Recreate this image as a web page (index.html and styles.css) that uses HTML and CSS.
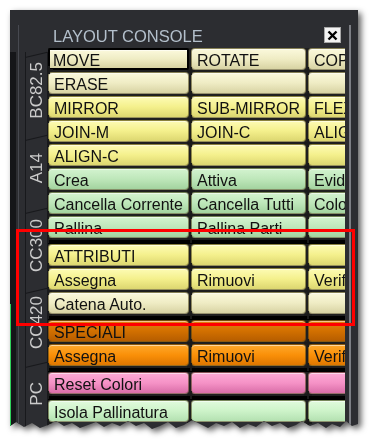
FILE: index.html
```html
<!DOCTYPE html>
<html lang="it">
<head>
  <meta charset="UTF-8" />
  <title>Layout Console</title>
  <link rel="stylesheet" href="styles.css">
</head>
<body>

  <div class="frame">
    <div class="window">

      <!-- colonna sinistra con le linguette -->
      <div class="side">
        <div class="edge"></div>
        <div class="vline"></div>
        <div class="tabs">
          <div class="tab t1"><span>BC82.5</span></div>
          <div class="tab t2"><span>A14</span></div>
          <div class="tab t3"><span>CC300</span></div>
          <div class="tab t4"><span>CC420</span></div>
          <div class="tab t5"><span>PC</span></div>
        </div>
      </div>

      <!-- pannello comandi -->
      <div class="main">
        <div class="head">
          <span class="title">LAYOUT CONSOLE</span>
          <span class="close">
            <svg width="11" height="11" viewBox="0 0 11 11">
              <path d="M1.5 1.5 L9.5 9.5 M9.5 1.5 L1.5 9.5" stroke="#000" stroke-width="2.4" fill="none"/>
            </svg>
          </span>
        </div>

        <div class="grp">
          <div class="cell pale sel">MOVE</div><div class="cell pale">ROTATE</div><div class="cell pale">COPY</div>
          <div class="cell pale">ERASE</div><div class="cell pale"></div><div class="cell pale"></div>
          <div class="cell yellow">MIRROR</div><div class="cell yellow">SUB-MIRROR</div><div class="cell yellow">FLEX</div>
          <div class="cell yellow">JOIN-M</div><div class="cell yellow">JOIN-C</div><div class="cell yellow">ALIGN</div>
          <div class="cell yellow">ALIGN-C</div><div class="cell yellow"></div><div class="cell yellow"></div>
          <div class="cell green">Crea</div><div class="cell green">Attiva</div><div class="cell green">Evidenzia</div>
          <div class="cell green">Cancella Corrente</div><div class="cell green">Cancella Tutti</div><div class="cell green">Colore</div>
          <div class="cell green">Pallina</div><div class="cell green">Pallina Parti</div><div class="cell green"></div>
        </div>
        <div class="sep"></div>

        <div class="grp">
          <div class="cell yellow">ATTRIBUTI</div><div class="cell yellow"></div><div class="cell yellow"></div>
          <div class="cell yellow">Assegna</div><div class="cell yellow">Rimuovi</div><div class="cell yellow">Verifica</div>
          <div class="cell pale">Catena Auto.</div><div class="cell pale"></div><div class="cell pale"></div>
        </div>
        <div class="sep"></div>

        <div class="grp">
          <div class="cell dark-orange">SPECIALI</div><div class="cell dark-orange"></div><div class="cell dark-orange"></div>
          <div class="cell orange">Assegna</div><div class="cell orange">Rimuovi</div><div class="cell orange">Verifica</div>
        </div>
        <div class="sep"></div>

        <div class="grp">
          <div class="cell pink">Reset Colori</div><div class="cell pink"></div><div class="cell pink"></div>
        </div>
        <div class="sep"></div>

        <div class="grp">
          <div class="cell mint">Isola Pallinatura</div><div class="cell mint"></div><div class="cell mint"></div>
        </div>
      </div>

      <div class="rail"><div class="rline"></div></div>
    </div>
  </div>

  <div class="mark"></div>

</body>
</html>
```

FILE: styles.css
```css
body {
  margin: 0;
  background: #ffffff;
  font-family: "Liberation Sans", Arial, sans-serif;
  position: relative;
  height: 447px;
  overflow: hidden;
}
.frame {
  position: absolute;
  left: 10px;
  top: 10px;
  filter: drop-shadow(3px 3px 3px rgba(0,0,0,0.65));
}
.window {
  width: 348px;
  height: 422px;
  background: #2c2d31;
  display: flex;
  clip-path: polygon(0 0, 348px 0, 348px 414px, 342px 416px, 336px 411px, 330px 417px, 322px 414px, 316px 418px, 308px 413px, 300px 416px, 292px 411px, 286px 415px, 278px 418px, 270px 413px, 262px 416px, 254px 411px, 246px 417px, 238px 414px, 230px 418px, 222px 412px, 214px 416px, 206px 413px, 198px 418px, 190px 414px, 182px 410px, 174px 415px, 166px 418px, 158px 412px, 150px 416px, 142px 419px, 134px 413px, 126px 416px, 118px 411px, 110px 416px, 102px 413px, 94px 417px, 86px 412px, 78px 415px, 70px 418px, 62px 413px, 54px 416px, 46px 411px, 38px 415px, 30px 418px, 22px 413px, 14px 417px, 6px 412px, 0 416px);
}

/* colonna sinistra */
.side {
  display: flex;
  width: 38px;
  flex-shrink: 0;
}
.edge {
  width: 6px;
  margin-top: 42px;
  background: linear-gradient(to right, #2fd25a 1px, transparent 1px) left bottom / 100% 128px no-repeat, #151619;
}
.vline {
  width: 1px;
  margin: 15px 0 0 2px;
  background: #474950;
}
.tabs {
  width: 22px;
  margin: 42px 0 0 6px;
  border-right: 1px solid #18191c;
  display: flex;
  flex-direction: column;
}
.tab {
  position: relative;
  border-left: 1px solid #18191c;
  display: flex;
  align-items: center;
  justify-content: center;
  padding-bottom: 6px;
  box-sizing: border-box;
}
.tab::before {
  content: "";
  position: absolute;
  left: -1px;
  top: 5px;
  width: 23px;
  height: 1px;
  background: #18191c;
  transform-origin: 0 0;
  transform: rotate(-13deg);
}
.tab span {
  writing-mode: vertical-rl;
  transform: rotate(180deg);
  color: #cbcbcb;
  font-size: 17px;
  line-height: 20px;
}
.t1 { height: 83px; }
.t2 { height: 73px; }
.t3 { height: 80px; }
.t4 { height: 74px; }
.t5 { flex: 1; }

/* pannello */
.main {
  width: 297px;
  flex-shrink: 0;
  display: flex;
  flex-direction: column;
  overflow: hidden;
}
.head {
  height: 38px;
  flex-shrink: 0;
  box-sizing: border-box;
  padding: 17px 4px 0 5px;
  display: flex;
  justify-content: space-between;
  align-items: flex-start;
}
.title {
  color: #b3bfcb;
  font-size: 16.5px;
  line-height: 19px;
}
.close {
  width: 17px;
  height: 16px;
  box-sizing: border-box;
  background: #f3f3f3;
  border: 1px solid #a8a8a8;
  display: flex;
  align-items: center;
  justify-content: center;
}

.grp {
  display: grid;
  grid-template-columns: 141px 115px 115px;
  grid-auto-rows: 22px;
  gap: 2px;
  background: #1f1f1f;
  flex-shrink: 0;
}
.sep {
  height: 6px;
  flex-shrink: 0;
  background: linear-gradient(#1f1f1f 0 2px, #000 2px);
}
.cell {
  position: relative;
  box-sizing: border-box;
  height: 22px;
  padding: 2px 5px 0 5px;
  line-height: 19px;
  font-size: 16px;
  color: #111;
  white-space: nowrap;
  border: 1px solid rgba(70,60,20,0.55);
  border-radius: 4px;
  box-shadow: inset 0 1px 0 rgba(255,255,255,0.55);
}
.cell::after {
  content: "";
  position: absolute;
  left: -5px;
  bottom: -6px;
  width: 8px;
  height: 8px;
  z-index: 2;
  background:
    linear-gradient(#1a1a1a, #1a1a1a) center / 2px 8px no-repeat,
    linear-gradient(#1a1a1a, #1a1a1a) center / 8px 2px no-repeat;
}
.cell.sel {
  border: 2px solid #000;
  padding: 1px 4px 0 3px;
  border-radius: 2px;
}

.pale { background: linear-gradient(#fbf9dc, #efecc4 50%, #d7d3a3); }
.yellow { background: linear-gradient(#fdfbb4, #f4f08c 50%, #dcd770); }
.green { background: linear-gradient(#d3f3cf, #bee7ba 50%, #a3d39f); }
.dark-orange { background: linear-gradient(#e6800e, #d27000 50%, #b65d00); }
.orange { background: linear-gradient(#ffa82c, #fa9008 50%, #de7700); }
.pink { background: linear-gradient(#fdaad5, #f592c6 50%, #d96ea8); }
.mint { background: linear-gradient(#e0fadc, #cdf3c9 50%, #b4e1b1); }

/* bordo destro */
.rail {
  width: 13px;
  flex-shrink: 0;
}
.rline {
  width: 2px;
  height: 100%;
  margin: 15px 0 0 4px;
  background: #7c7e84;
}

/* riquadro rosso */
.mark {
  position: absolute;
  left: 16px;
  top: 229px;
  width: 339px;
  height: 97px;
  box-sizing: border-box;
  border: 3px solid #ff0000;
}
```
